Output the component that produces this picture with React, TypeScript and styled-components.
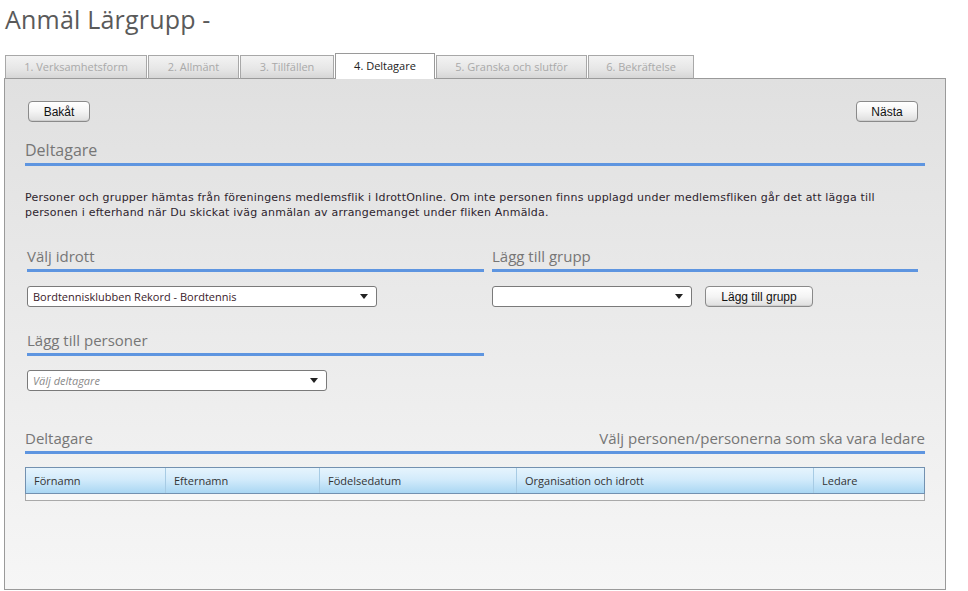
import styled, { createGlobalStyle } from "styled-components";

const GlobalStyle = createGlobalStyle`
  body {
    margin: 0;
    background: #fff;
    font-family: "Open Sans", "DejaVu Sans", sans-serif;
  }
`;

const Page = styled.div`
  width: 942px;
  padding-left: 4px;
`;

const Title = styled.h1`
  margin: 0;
  padding: 3px 0 0 1px;
  height: 53px;
  box-sizing: border-box;
  font-weight: normal;
  font-size: 25px;
  line-height: 32px;
  color: #5a5a5a;
  letter-spacing: 0.2px;
`;

const TabBar = styled.div`
  display: flex;
  align-items: flex-end;
  gap: 1px;
  padding-left: 1px;
  height: 26px;
  margin-bottom: -1px;
  position: relative;
  z-index: 1;
`;

const Tab = styled.div<{ $active?: boolean; $w: number }>`
  width: ${(p) => p.$w}px;
  box-sizing: border-box;
  height: ${(p) => (p.$active ? 26 : 24)}px;
  border: 1px solid ${(p) => (p.$active ? "#9a9a9a" : "#a8a8a8")};
  border-bottom: ${(p) => (p.$active ? "none" : "1px solid #9a9a9a")};
  background: ${(p) =>
    p.$active ? "#fff" : "linear-gradient(#f3f3f3, #e6e6e6 60%, #d6d6d6)"};
  color: ${(p) => (p.$active ? "#222" : "#a9a9a9")};
  font-size: 11px;
  text-align: center;
  line-height: ${(p) => (p.$active ? 24 : 21)}px;
`;

const Panel = styled.div`
  height: 512px;
  box-sizing: border-box;
  border: 1px solid #9a9a9a;
  background: linear-gradient(#e0e0e0, #ececec 55%, #f6f6f6);
  padding: 22px 20px 0 20px;
`;

const ButtonRow = styled.div`
  display: flex;
  justify-content: space-between;
  padding: 0 7px 0 3px;
`;

const Button = styled.button<{ $w?: number }>`
  width: ${(p) => p.$w ?? 62}px;
  height: 21px;
  padding: 0;
  border: 1px solid #8a8a8a;
  border-radius: 4px;
  background: linear-gradient(#ffffff, #f4f4f4 50%, #dedede);
  font-family: "Liberation Sans", Arial, sans-serif;
  font-size: 12px;
  color: #111;
  box-shadow: inset 0 -1px 0 #cfcfcf;
`;

const Heading = styled.div<{ $size?: number }>`
  display: flex;
  justify-content: space-between;
  align-items: flex-end;
  font-size: ${(p) => p.$size ?? 15}px;
  line-height: 20px;
  color: #767676;
  border-bottom: 3px solid #5e95e0;
  padding-bottom: 3px;
`;

const Intro = styled.p`
  margin: 24px 0 0;
  font-family: "DejaVu Sans", Verdana, sans-serif;
  font-size: 11px;
  letter-spacing: 0.2px;
  line-height: 15px;
  color: #2e1f2e;
`;

const Columns = styled.div`
  display: grid;
  grid-template-columns: 457px 426px;
  column-gap: 8px;
  padding-left: 2px;
  margin-top: 26px;
`;

const Column = styled.div`
  display: flex;
  flex-direction: column;
`;

const FieldRow = styled.div`
  display: flex;
  align-items: center;
  gap: 13px;
  margin-top: 14px;
`;

const Select = styled.div<{ $w: number; $placeholder?: boolean }>`
  width: ${(p) => p.$w}px;
  height: 21px;
  box-sizing: border-box;
  border: 1px solid #7a7a7a;
  border-radius: 3px;
  background: #fff;
  display: flex;
  align-items: center;
  justify-content: space-between;
  padding: 0 8px 0 5px;
  font-size: 11px;
  color: ${(p) => (p.$placeholder ? "#8a8a8a" : "#3a1a2a")};
  font-style: ${(p) => (p.$placeholder ? "italic" : "normal")};
`;

const Caret = styled.span`
  width: 0;
  height: 0;
  border-left: 4px solid transparent;
  border-right: 4px solid transparent;
  border-top: 5px solid #222;
`;

const Gap = styled.div<{ $h: number }>`
  height: ${(p) => p.$h}px;
`;

const Table = styled.div`
  margin-top: 13px;
  border: 1px solid #a9a9a9;
  border-top: none;
  padding-bottom: 6px;
  background: #f8f8f8;
`;

const HeaderRow = styled.div`
  display: grid;
  grid-template-columns: 139px 154px 197px 297px 1fr;
  height: 27px;
  box-sizing: border-box;
  border: 1px solid #7391b0;
  margin: 0 -1px;
  background: linear-gradient(#e6f4fd, #d3ebfb 45%, #aad7f3);
`;

const HeaderCell = styled.div`
  font-size: 11px;
  line-height: 25px;
  color: #333;
  padding-left: 8px;
  border-left: 1px solid #a7cbe4;
  &:first-child {
    border-left: none;
  }
`;

const tabs = [
  { label: "1. Verksamhetsform", w: 142 },
  { label: "2. Allmänt", w: 91 },
  { label: "3. Tillfällen", w: 94 },
  { label: "4. Deltagare", w: 100, active: true },
  { label: "5. Granska och slutför", w: 151 },
  { label: "6. Bekräftelse", w: 106 },
];

const columns = ["Förnamn", "Efternamn", "Födelsedatum", "Organisation och idrott", "Ledare"];

export default function App() {
  return (
    <Page>
      <GlobalStyle />
      <Title>Anmäl Lärgrupp -</Title>
      <TabBar>
        {tabs.map((t) => (
          <Tab key={t.label} $w={t.w} $active={t.active}>
            {t.label}
          </Tab>
        ))}
      </TabBar>
      <Panel>
        <ButtonRow>
          <Button>Bakåt</Button>
          <Button>Nästa</Button>
        </ButtonRow>
        <Gap $h={18} />
        <Heading $size={16}>Deltagare</Heading>
        <Intro>
          Personer och grupper hämtas från föreningens medlemsflik i IdrottOnline. Om inte
          personen finns upplagd under medlemsfliken går det att lägga till personen i
          efterhand när Du skickat iväg anmälan av arrangemanget under fliken Anmälda.
        </Intro>
        <Columns>
          <Column>
            <Heading>Välj idrott</Heading>
            <FieldRow>
              <Select $w={350}>
                Bordtennisklubben Rekord - Bordtennis
                <Caret />
              </Select>
            </FieldRow>
            <Gap $h={23} />
            <Heading>Lägg till personer</Heading>
            <FieldRow>
              <Select $w={300} $placeholder>
                Välj deltagare
                <Caret />
              </Select>
            </FieldRow>
          </Column>
          <Column>
            <Heading>Lägg till grupp</Heading>
            <FieldRow>
              <Select $w={200}>
                <span />
                <Caret />
              </Select>
              <Button $w={108}>Lägg till grupp</Button>
            </FieldRow>
          </Column>
        </Columns>
        <Gap $h={37} />
        <Heading>
          <span>Deltagare</span>
          <span>Välj personen/personerna som ska vara ledare</span>
        </Heading>
        <Table>
          <HeaderRow>
            {columns.map((c) => (
              <HeaderCell key={c}>{c}</HeaderCell>
            ))}
          </HeaderRow>
        </Table>
      </Panel>
    </Page>
  );
}
